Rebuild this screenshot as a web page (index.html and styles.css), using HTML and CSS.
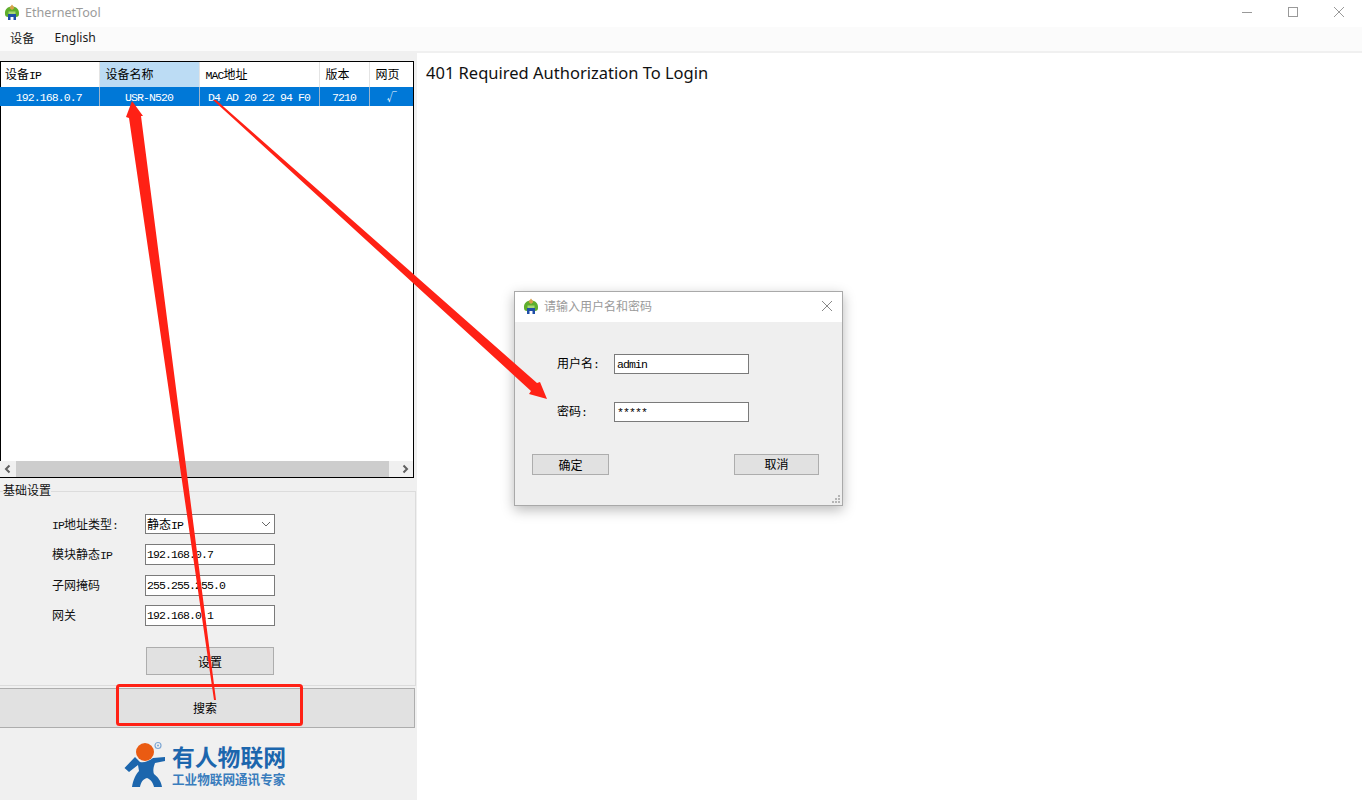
FILE: index.html
```html
<!DOCTYPE html>
<html lang="zh-CN">
<head>
    <meta charset="UTF-8">
    <title>EthernetTool</title>
    <link rel="stylesheet" href="styles.css">
</head>
<body>
    <svg width="0" height="0" class="defs">
        <symbol id="app-icon" viewBox="0 0 16 16">
            <path d="M1 10 C0.5 5 4 2.5 8 2.5 C12 2.5 15.5 5 15 10 C15 12 14 13 12 13 L4 13 C2 13 1 12 1 10 Z" fill="#5fae2c"/>
            <path d="M5.5 4 L8 0.5 L10.5 4 L8 6 Z" fill="#d9a04a"/>
            <path d="M4.5 7.5 H11.5 V10 H4.5 Z" fill="#a6d873"/>
            <path d="M4 10 H12 V16 H9.5 V13 H6.5 V16 H4 Z" fill="#1f4fa8"/>
        </symbol>
    </svg>

    <header class="titlebar">
        <svg class="app-icon"><use href="#app-icon"/></svg>
        <span class="title-text">EthernetTool</span>
        <div class="win-controls">
            <svg width="12" height="12" viewBox="0 0 12 12"><path d="M1 6.5 H11" stroke="#999" fill="none"/></svg>
            <svg width="12" height="12" viewBox="0 0 12 12"><rect x="1.5" y="1.5" width="9" height="9" stroke="#999" fill="none"/></svg>
            <svg width="12" height="12" viewBox="0 0 12 12"><path d="M1 1 L11 11 M11 1 L1 11" stroke="#999" fill="none"/></svg>
        </div>
    </header>

    <nav class="menubar">
        <span class="menu-item">设备</span>
        <span class="menu-item">English</span>
    </nav>

    <div class="main">
        <aside class="left-panel">
            <div class="device-list">
                <table class="device-table">
                    <colgroup>
                        <col class="col-ip"><col class="col-name"><col class="col-mac"><col class="col-ver"><col class="col-web">
                    </colgroup>
                    <thead>
                        <tr>
                            <th>设备<span class="lat">IP</span></th>
                            <th class="sorted">设备名称</th>
                            <th><span class="lat">MAC</span>地址</th>
                            <th>版本</th>
                            <th>网页</th>
                        </tr>
                    </thead>
                    <tbody>
                        <tr class="selected">
                            <td>192.168.0.7</td>
                            <td>USR-N520</td>
                            <td>D4 AD 20 22 94 F0</td>
                            <td>7210</td>
                            <td class="tick">√</td>
                        </tr>
                    </tbody>
                </table>
                <div class="hscroll">
                    <svg width="16" height="16" viewBox="0 0 16 16"><path d="M9.5 4.5 L6 8 L9.5 11.5" stroke="#606060" stroke-width="2" fill="none"/></svg>
                    <div class="hscroll-track"><div class="hscroll-thumb"></div></div>
                    <svg width="16" height="16" viewBox="0 0 16 16"><path d="M6.5 4.5 L10 8 L6.5 11.5" stroke="#606060" stroke-width="2" fill="none"/></svg>
                </div>
            </div>

            <fieldset class="basic-group">
                <legend>基础设置</legend>
                <div class="form-row row-select">
                    <label><span class="lat">IP</span>地址类型<span class="lat">:</span></label>
                    <div class="field select-field">
                        <span class="select-value">静态<span class="lat">IP</span></span>
                        <svg width="10" height="6" viewBox="0 0 10 6"><path d="M1 1 L5 5 L9 1" stroke="#666" fill="none"/></svg>
                    </div>
                </div>
                <div class="form-row">
                    <label>模块静态<span class="lat">IP</span></label>
                    <div class="field">192.168.0.7</div>
                </div>
                <div class="form-row">
                    <label>子网掩码</label>
                    <div class="field">255.255.255.0</div>
                </div>
                <div class="form-row">
                    <label>网关</label>
                    <div class="field">192.168.0.1</div>
                </div>
                <button class="btn set-btn">设置</button>
            </fieldset>

            <button class="btn search-btn">搜索</button>

            <div class="logo">
                <svg class="logo-man" width="42" height="46" viewBox="0 0 42 46">
                    <circle cx="21" cy="11" r="9" fill="#ea5b12"/>
                    <circle cx="34" cy="4.5" r="3" fill="none" stroke="#7fa8d4" stroke-width="1.2"/>
                    <circle cx="34" cy="4.5" r="1" fill="#7fa8d4"/>
                    <path d="M0.5 27 L11 16 L16 21 C20 22 25 20 29 17 L41 16 L41 20 L31 22 C29 27 29 31 30 33 C34 36 37 40 38 46 L30 46 C29 41 26 38 23 37 C19 38 17 41 16 46 L8 46 C9 39 12 33 15 30 L14 24 L5 31 Z" fill="#1c66ad"/>
                </svg>
                <div class="logo-text">
                    <div class="logo-name">有人物联网</div>
                    <div class="logo-sub">工业物联网通讯专家</div>
                </div>
            </div>
        </aside>

        <section class="web-pane">
            <p class="auth-msg">401 Required Authorization To Login</p>
        </section>
    </div>

    <!-- login popup -->
    <div class="dialog">
        <div class="dialog-title">
            <svg class="app-icon"><use href="#app-icon"/></svg>
            <span class="dialog-title-text">请输入用户名和密码</span>
            <svg class="dialog-close" width="12" height="12" viewBox="0 0 12 12"><path d="M1 1 L11 11 M11 1 L1 11" stroke="#888" fill="none"/></svg>
        </div>
        <div class="dialog-body">
            <div class="login-row">
                <label>用户名<span class="lat">:</span></label>
                <div class="field login-field">admin</div>
            </div>
            <div class="login-row">
                <label>密码<span class="lat">:</span></label>
                <div class="field login-field">*****</div>
            </div>
            <div class="dialog-btns">
                <button class="btn ok-btn">确定</button>
                <button class="btn cancel-btn">取消</button>
            </div>
        </div>
        <svg class="grip" width="8" height="8" viewBox="0 0 8 8" fill="#b5b5b5">
            <rect x="6" y="0" width="2" height="2"/><rect x="3" y="3" width="2" height="2"/><rect x="6" y="3" width="2" height="2"/>
            <rect x="0" y="6" width="2" height="2"/><rect x="3" y="6" width="2" height="2"/><rect x="6" y="6" width="2" height="2"/>
        </svg>
    </div>

    <!-- red annotations drawn on top of the screenshot -->
    <svg class="marks" width="1362" height="800" viewBox="0 0 1362 800">
        <rect x="117.5" y="685.5" width="184" height="39" rx="2" fill="none" stroke="#ff2115" stroke-width="3"/>
        <polygon points="132,101 143,116 141,116 216,700 214,700 129,118 126,117" fill="#ff2115"/>
        <polygon points="213,100 216,100 537,383 540,382 547,399 529,394 531,391" fill="#ff2115"/>
    </svg>
</body>
</html>
```

FILE: styles.css
```css
html, body {
    margin: 0;
    padding: 0;
}
body {
    position: relative;
    width: 1362px;
    height: 800px;
    overflow: hidden;
    background-color: #fff;
    font-family: "Noto Sans CJK SC", "Noto Sans", sans-serif;
    font-size: 12px;
    color: #000;
}
.defs {
    position: absolute;
}
.lat {
    font-family: "Liberation Mono", monospace;
    font-size: 11.5px;
    letter-spacing: -0.9px;
}
.app-icon {
    width: 16px;
    height: 16px;
    flex: none;
}

/* title + menu */
.titlebar {
    display: flex;
    align-items: center;
    height: 27px;
    padding: 0 0 3px 4px;
    box-sizing: border-box;
}
.title-text {
    margin-left: 5px;
    font-family: "Noto Sans", sans-serif;
    font-size: 12.6px;
    color: #9b9b9b;
}
.win-controls {
    display: flex;
    gap: 34px;
    margin-left: auto;
    margin-right: 17px;
}
.menubar {
    display: flex;
    gap: 20px;
    align-items: center;
    height: 24px;
    padding-left: 10px;
    background-color: #fbfbfb;
    border-bottom: 2px solid #f0f0f0;
}
.menu-item {
    padding-bottom: 3px;
    font-family: "Noto Sans", "Noto Sans CJK SC", sans-serif;
    font-size: 12.2px;
    color: #1a1a1a;
}

/* layout */
.main {
    display: flex;
    height: 747px;
}
.left-panel {
    display: flex;
    flex-direction: column;
    width: 417px;
    background-color: #f0f0f0;
    padding-top: 8px;
    box-sizing: border-box;
}
.web-pane {
    flex: 1;
    padding: 9px 9px;
}
.auth-msg {
    margin: 0;
    font-family: "Noto Sans", sans-serif;
    font-size: 16.5px;
    line-height: 22px;
    color: #111;
}

/* device table */
.device-list {
    display: flex;
    flex-direction: column;
    justify-content: space-between;
    width: 414px;
    height: 417px;
    box-sizing: border-box;
    border: 1px solid #000;
    background-color: #fff;
}
.device-table {
    width: 414px;
    margin-left: -2px;
    table-layout: fixed;
    border-collapse: collapse;
}
.col-ip { width: 100px; }
.col-name { width: 100px; }
.col-mac { width: 120px; }
.col-ver { width: 50px; }
.device-table th {
    height: 25px;
    padding: 0 0 2px 6px;
    box-sizing: border-box;
    font-weight: normal;
    text-align: left;
    border-right: 1px solid #e4e4e4;
}
.device-table th.sorted {
    background-color: #bcdcf4;
}
.device-table td {
    height: 19px;
    padding: 2px 0 0 0;
    box-sizing: border-box;
    font-family: "Liberation Mono", monospace;
    font-size: 11.5px;
    letter-spacing: -0.9px;
    text-align: center;
    color: #fff;
    background-color: #0078d7;
    border-right: 1px solid #9db4ca;
}
.device-table td.tick {
    padding-top: 0;
    font-family: "Noto Sans CJK SC", sans-serif;
    font-size: 10px;
}
.device-table th:last-child, .device-table td:last-child {
    border-right: none;
}
.hscroll {
    display: flex;
    align-items: center;
    height: 16px;
    margin-left: -1px;
    background-color: #f0f0f0;
}
.hscroll-track {
    flex: 1;
    height: 16px;
}
.hscroll-thumb {
    width: 373px;
    height: 16px;
    background-color: #cdcdcd;
}

/* basic settings */
.basic-group {
    height: 204px;
    box-sizing: border-box;
    margin: 4px 1px 0 0;
    padding: 0 0 0 3px;
    border: 1px solid #dcdcdc;
    border-left: none;
}
.basic-group legend {
    padding: 0 0 2px;
    line-height: 16px;
    color: #111;
}
.form-row {
    display: flex;
    align-items: center;
    margin: 0 0 9.5px 49px;
}
.form-row label {
    width: 93px;
    padding-bottom: 2px;
    color: #111;
}
.row-select {
    margin-top: 14px;
    margin-bottom: 10px;
}
.field {
    display: flex;
    align-items: center;
    width: 130px;
    height: 21px;
    padding-left: 1px;
    box-sizing: border-box;
    border: 1px solid #7a7a7a;
    background-color: #fff;
    font-family: "Liberation Mono", monospace;
    font-size: 11.5px;
    letter-spacing: -0.9px;
}
.select-field {
    justify-content: space-between;
    height: 20px;
    padding-right: 3px;
    font-family: "Noto Sans CJK SC", sans-serif;
    font-size: 12px;
    letter-spacing: 0;
}
.select-value {
    padding-bottom: 2px;
}
.btn {
    display: block;
    padding: 0;
    box-sizing: border-box;
    border: 1px solid #adadad;
    background-color: #e1e1e1;
    font-family: "Noto Sans CJK SC", sans-serif;
    font-size: 12px;
    color: #000;
}
.set-btn {
    width: 128px;
    height: 28px;
    margin: 21px 0 0 143px;
}
.search-btn {
    width: 415px;
    height: 40px;
    margin-top: 2px;
    border-left: none;
    padding-bottom: 1px;
    padding-right: 4px;
}

/* logo */
.logo {
    display: flex;
    margin: 13px 0 0 124px;
    gap: 6px;
    color: #1c66ad;
}
.logo-name {
    margin-top: 4px;
    font-size: 22.8px;
    font-weight: 700;
    line-height: 24px;
}
.logo-sub {
    margin-top: 3px;
    font-size: 12.6px;
    font-weight: 700;
    line-height: 14px;
    color: #3a7dbd;
}

/* login dialog */
.dialog {
    position: absolute;
    left: 514px;
    top: 291px;
    width: 329px;
    height: 215px;
    box-sizing: border-box;
    border: 1px solid #a9a9a9;
    background-color: #efefef;
    box-shadow: 0 4px 12px rgba(0, 0, 0, 0.28);
}
.dialog-title {
    display: flex;
    align-items: center;
    height: 30px;
    box-sizing: border-box;
    padding: 0 9px 2px 8px;
    background-color: #fff;
}
.dialog-title-text {
    margin-left: 5px;
    padding-bottom: 2px;
    color: #9a9a9a;
}
.dialog-close {
    margin-left: auto;
}
.dialog-body {
    padding: 32px 23px 0 17px;
}
.login-row {
    display: flex;
    align-items: center;
    margin-bottom: 28px;
    padding-left: 25px;
}
.login-row label {
    width: 57px;
    padding-bottom: 3px;
}
.login-field {
    width: 135px;
    height: 20px;
    padding-left: 2px;
}
.dialog-btns {
    display: flex;
    justify-content: space-between;
    margin-top: 32px;
}
.ok-btn {
    width: 77px;
    height: 21px;
}
.cancel-btn {
    width: 85px;
    height: 21px;
    padding-bottom: 3px;
}
.grip {
    position: absolute;
    right: 2px;
    bottom: 2px;
}

/* annotation layer */
.marks {
    position: absolute;
    left: 0;
    top: 0;
    pointer-events: none;
}
```
